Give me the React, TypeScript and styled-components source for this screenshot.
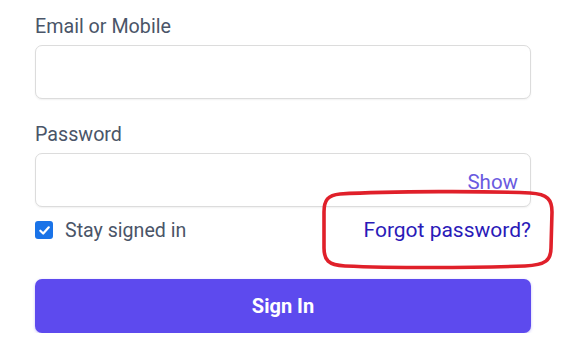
import React from "react";
import styled, { createGlobalStyle } from "styled-components";

const Global = createGlobalStyle`
  html, body { margin: 0; padding: 0; background: #ffffff; }
  body { font-family: Roboto, "Liberation Sans", sans-serif; }
`;

const Form = styled.form`
  position: relative;
  width: 496px;
  padding: 14px 0 0 35px;
  display: flex;
  flex-direction: column;
`;

const Field = styled.div<{ $gap?: number }>`
  display: flex;
  flex-direction: column;
  margin-bottom: ${(p) => p.$gap ?? 0}px;
`;

const Label = styled.label`
  font-size: 19.7px;
  color: #4a5568;
  line-height: 26px;
  margin-bottom: 5px;
`;

const InputWrap = styled.div`
  position: relative;
  display: flex;
`;

const Input = styled.input`
  box-sizing: border-box;
  width: 100%;
  height: 54px;
  border: 1px solid #dcdcdc;
  border-radius: 7px;
  box-shadow: 0 1px 2px rgba(0, 0, 0, 0.06);
  font: inherit;
  font-size: 18px;
  padding: 0 14px;
  outline: none;
`;

const ShowButton = styled.span`
  position: absolute;
  right: 13px;
  bottom: 14px;
  font-size: 20.5px;
  line-height: 22px;
  color: #6a5ae0;
`;

const OptionsRow = styled.div`
  display: flex;
  align-items: center;
  justify-content: space-between;
  height: 46px;
  margin-bottom: 26px;
`;

const CheckLabel = styled.label`
  display: flex;
  align-items: center;
  gap: 12px;
  font-size: 19.6px;
  color: #4a5568;
`;

const Check = styled.span`
  width: 18px;
  height: 18px;
  border-radius: 3px;
  background: #1a73e8;
  display: flex;
  align-items: center;
  justify-content: center;
`;

const ForgotLink = styled.a`
  font-size: 21px;
  color: #2a1ab8;
  text-decoration: none;
  margin-right: 0;
`;

const SubmitButton = styled.button`
  height: 54px;
  width: 100%;
  border: none;
  border-radius: 7px;
  background: #5d4aee;
  color: #ffffff;
  font-family: Roboto, "Liberation Sans", sans-serif;
  font-size: 20px;
  font-weight: 700;
  box-shadow: 0 1px 3px rgba(93, 74, 238, 0.35);
`;

const Annotation = styled.svg`
  position: absolute;
  left: 320px;
  top: 190px;
  width: 236px;
  height: 80px;
  overflow: visible;
`;

export default function App() {
  return (
    <>
      <Global />
      <Form onSubmit={(e) => e.preventDefault()}>
        <Field $gap={23}>
          <Label>Email or Mobile</Label>
          <Input type="text" />
        </Field>
        <Field>
          <Label>Password</Label>
          <InputWrap>
            <Input type="password" />
            <ShowButton>Show</ShowButton>
          </InputWrap>
        </Field>
        <OptionsRow>
          <CheckLabel>
            <Check>
              <svg width="13" height="13" viewBox="0 0 14 14">
                <path d="M2.5 7.2 L5.6 10.2 L11.6 3.6" fill="none" stroke="#fff" strokeWidth="2.4" strokeLinecap="round" strokeLinejoin="round" />
              </svg>
            </Check>
            Stay signed in
          </CheckLabel>
          <ForgotLink href="#">Forgot password?</ForgotLink>
        </OptionsRow>
        <SubmitButton type="submit">Sign In</SubmitButton>
        <Annotation viewBox="0 0 236 80">
          <path
            d="M20 4 C70 1 170 1 210 3 C228 4 232 10 232 22 L231 58 C231 70 226 75 205 76 C150 78 70 78 25 76 C8 75 4 70 4 58 L4 22 C4 10 8 5 20 4 Z"
            fill="none"
            stroke="#e0202a"
            strokeWidth="3.6"
          />
        </Annotation>
      </Form>
    </>
  );
}
